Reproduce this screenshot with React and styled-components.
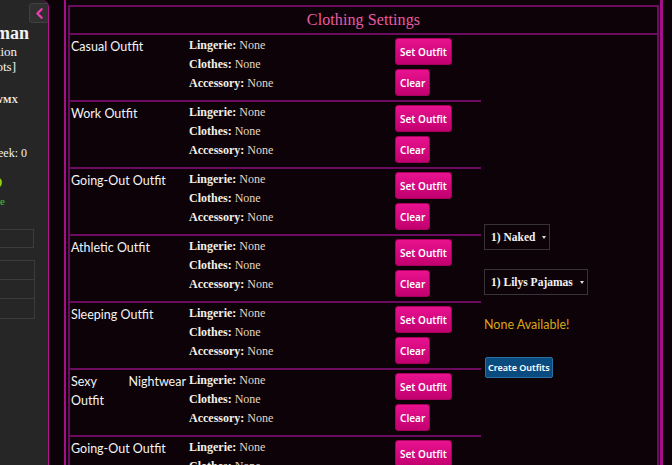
import React from "react";
import styled, { createGlobalStyle } from "styled-components";
import { ChevronLeft } from "lucide-react";

const Global = createGlobalStyle`
  html, body { margin: 0; padding: 0; background: #0c0208; }
  #root { height: 465px; overflow: hidden; }
`;

const Page = styled.div`
  display: flex;
  align-items: flex-start;
  height: 465px;
  overflow: hidden;
  background: #0c0208;
`;

/* ---------- side panel ---------- */
const Sidebar = styled.aside`
  position: relative;
  flex: 0 0 49px;
  height: 465px;
  background: #262626;
  border-right: 1px solid #b3138c;
  border-top-right-radius: 7px;
  overflow: hidden;
  font-family: "Liberation Serif", serif;
  color: #f2f2f2;
  display: flex;
  flex-direction: column;
  padding-top: 22px;
  box-sizing: border-box;
`;

const Toggle = styled.button`
  position: absolute;
  top: 3px;
  left: 29px;
  width: 20px;
  height: 20px;
  padding: 0;
  display: flex;
  align-items: center;
  justify-content: center;
  background: #303030;
  border: 1px solid #404040;
  border-radius: 3px;
  color: #ec3cae;
`;

const Line = styled.div`
  width: ${(p) => p.$end}px;
  display: flex;
  justify-content: flex-end;
  white-space: nowrap;
  font-size: ${(p) => p.$size || 13}px;
  line-height: ${(p) => p.$lh || 15}px;
  font-weight: ${(p) => (p.$bold ? 700 : 400)};
  color: ${(p) => p.$color || "#f2f2f2"};
  margin-top: ${(p) => p.$gap || 0}px;
`;

const Dot = styled.div`
  width: ${(p) => p.$end}px;
  display: flex;
  justify-content: flex-end;
  margin-top: ${(p) => p.$gap || 0}px;
  &::after {
    content: "";
    flex: 0 0 11px;
    height: 11px;
    border-radius: 50%;
    background: #8fcc10;
  }
`;

const Field = styled.div`
  width: 34px;
  height: 19px;
  border: 1px solid #3b3b3b;
  border-left: none;
  box-sizing: border-box;
  margin-top: ${(p) => p.$gap || 0}px;
`;

const FieldGroup = styled.div`
  width: 34px;
  margin-top: ${(p) => p.$gap || 0}px;
  border: 1px solid #3b3b3b;
  border-left: none;
  display: grid;
  grid-template-rows: repeat(3, 19px);
  & > div { border-bottom: 1px solid #3b3b3b; }
  & > div:last-child { border-bottom: none; }
`;

/* ---------- main panel ---------- */
const Main = styled.main`
  margin-left: 15px;
  width: 599px;
  box-sizing: border-box;
  border-left: 2px solid #a3108a;
  border-right: 3px solid #a3108a;
  padding: 5px 1px 0 2px;
  min-height: 600px;
`;

const Table = styled.section`
  border: 2px solid #6c0c60;
  border-bottom: none;
`;

const Header = styled.header`
  height: 26px;
  border-bottom: 2px solid #6c0c60;
  display: flex;
  align-items: center;
  justify-content: center;
  font-family: "Liberation Serif", serif;
  font-size: 16px;
  color: #ea5ca2;
  letter-spacing: 0.1px;
`;

const Body = styled.div`
  display: flex;
  align-items: flex-start;
`;

const Rows = styled.div`
  width: 411px;
  flex: 0 0 411px;
`;

const Row = styled.div`
  display: grid;
  grid-template-columns: 118px 207px 1fr;
  height: 65px;
  border-bottom: 2px solid #6c0c60;
  overflow: hidden;
`;

const Name = styled.div`
  padding: 2px 2px 0 1px;
  font-family: Lato, "Noto Sans", sans-serif;
  font-size: 12.5px;
  line-height: 19px;
  color: #f4f4f4;
  text-align: justify;
`;

const Details = styled.div`
  padding: 1px 0 0 1px;
  font-family: "Liberation Serif", serif;
  font-size: 12px;
  line-height: 19px;
  color: #e3d9c6;
`;

const Label = styled.b`
  color: #f4efe6;
  margin-right: 3px;
`;

const Actions = styled.div`
  padding-top: 3px;
  display: flex;
  flex-direction: column;
  align-items: flex-start;
  gap: 4px;
`;

const PinkButton = styled.button`
  height: 27px;
  padding: 0 4px;
  border: 1px solid #a8005f;
  border-radius: 3px;
  background: linear-gradient(#e8128f, #c2006f);
  color: #fff;
  font-family: "Noto Sans", sans-serif;
  font-size: 10px;
  font-weight: 600;
  cursor: pointer;
`;

const Side = styled.div`
  flex: 1;
  padding: 189px 0 0 3px;
  display: flex;
  flex-direction: column;
  align-items: flex-start;
`;

const Select = styled.div`
  height: 26px;
  box-sizing: border-box;
  display: flex;
  align-items: center;
  gap: 7px;
  padding: 0 3px 0 6px;
  border: 1px solid #383338;
  background: #0c0208;
  color: #f2f2f2;
  font-family: "Liberation Serif", serif;
  font-weight: 700;
  font-size: 11.5px;
  margin-top: ${(p) => p.$gap || 0}px;
  &::after {
    content: "";
    border-left: 2px solid transparent;
    border-right: 2px solid transparent;
    border-top: 3px solid #ddd;
  }
`;

const Notice = styled.div`
  margin-top: 22px;
  font-family: Lato, "Noto Sans", sans-serif;
  font-size: 12.5px;
  line-height: 16px;
  color: #dba51b;
`;

const BlueButton = styled.button`
  margin: 24px 0 0 1px;
  height: 21px;
  padding: 0 2px;
  border: 1px solid #2a70a5;
  border-radius: 2px;
  background: #0b4c80;
  color: #fff;
  font-family: "Noto Sans", sans-serif;
  font-size: 9px;
  font-weight: 600;
`;

const outfits = [
  "Casual Outfit",
  "Work Outfit",
  "Going-Out Outfit",
  "Athletic Outfit",
  "Sleeping Outfit",
  "Sexy Nightwear Outfit",
  "Going-Out Outfit",
];

export default function App() {
  return (
    <>
      <Global />
      <Page>
        <Sidebar>
          <Toggle aria-label="Collapse">
            <ChevronLeft size={17} strokeWidth={3.4} />
          </Toggle>
          <Line $end={29} $size={18} $lh={22} $bold>Lily Freeman</Line>
          <Line $end={17} $size={13} $lh={15}>Occupation</Line>
          <Line $end={16} $size={13} $lh={15}>[Outfit Slots]</Line>
          <Line $end={18} $size={9} $lh={10} $gap={21} $bold>KWMX</Line>
          <Line $end={27} $size={12} $lh={14} $gap={41}>Current Week: 0</Line>
          <Dot $end={2} $gap={17} />
          <Line $end={5} $size={11} $lh={13} $gap={7} $color="#3fc33a">Available to change</Line>
          <Field $gap={21} />
          <FieldGroup $gap={12}>
            <div />
            <div />
            <div />
          </FieldGroup>
        </Sidebar>

        <Main>
          <Table>
            <Header>Clothing Settings</Header>
            <Body>
              <Rows>
                {outfits.map((name, i) => (
                  <Row key={i}>
                    <Name>{name}</Name>
                    <Details>
                      <div><Label>Lingerie:</Label>None</div>
                      <div><Label>Clothes:</Label>None</div>
                      <div><Label>Accessory:</Label>None</div>
                    </Details>
                    <Actions>
                      <PinkButton>Set Outfit</PinkButton>
                      <PinkButton>Clear</PinkButton>
                    </Actions>
                  </Row>
                ))}
              </Rows>
              <Side>
                <Select>1) Naked</Select>
                <Select $gap={19}>1) Lilys Pajamas</Select>
                <Notice>None Available!</Notice>
                <BlueButton>Create Outfits</BlueButton>
              </Side>
            </Body>
          </Table>
        </Main>
      </Page>
    </>
  );
}
